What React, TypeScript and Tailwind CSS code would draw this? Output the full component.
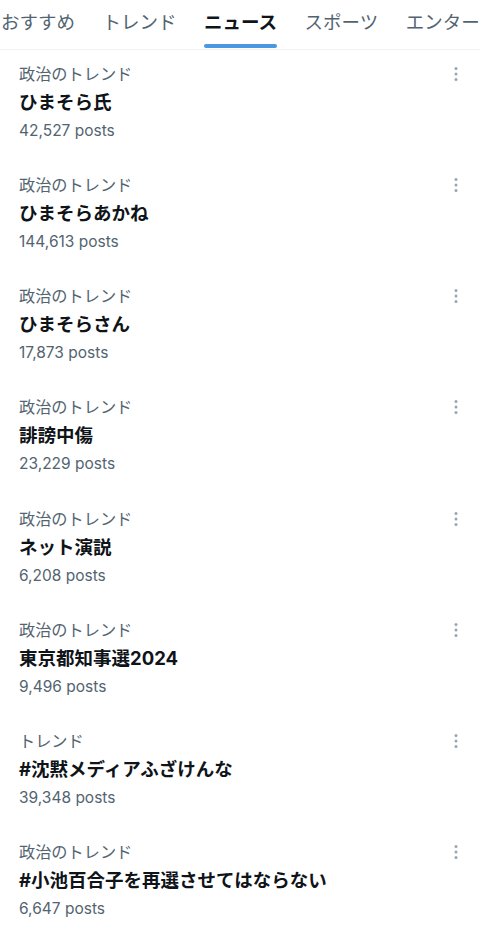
import * as React from 'react';

const tabs = ['おすすめ', 'トレンド', 'ニュース', 'スポーツ', 'エンター'];

const trends = [
  { cat: '政治のトレンド', title: 'ひまそら氏', posts: '42,527 posts' },
  { cat: '政治のトレンド', title: 'ひまそらあかね', posts: '144,613 posts' },
  { cat: '政治のトレンド', title: 'ひまそらさん', posts: '17,873 posts' },
  { cat: '政治のトレンド', title: '誹謗中傷', posts: '23,229 posts' },
  { cat: '政治のトレンド', title: 'ネット演説', posts: '6,208 posts' },
  { cat: '政治のトレンド', title: '東京都知事選2024', posts: '9,496 posts' },
  { cat: 'トレンド', title: '#沈黙メディアふざけんな', posts: '39,348 posts' },
  { cat: '政治のトレンド', title: '#小池百合子を再選させてはならない', posts: '6,647 posts' },
];

const MoreIcon = () => (
  <svg width="6" height="16" viewBox="0 0 6 16" className="text-[#9aa5b0]">
    <circle cx="3" cy="2.5" r="1.5" fill="currentColor" />
    <circle cx="3" cy="8" r="1.5" fill="currentColor" />
    <circle cx="3" cy="13.5" r="1.5" fill="currentColor" />
  </svg>
);

export default function App() {
  return (
    <div
      className="w-[480px] min-h-[931px] bg-white overflow-hidden"
      style={{ fontFamily: 'Inter, "Noto Sans CJK JP", sans-serif' }}
    >
      <div className="h-[50px] flex gap-[27.5px] pl-px border-b border-[#eff3f4] whitespace-nowrap overflow-hidden">
        {tabs.map((t, i) => (
          <div key={t} className="relative flex flex-col shrink-0">
            <span
              className={
                'text-[18.5px] leading-[44px] ' +
                (i === 2 ? 'font-bold text-[#0f1419]' : 'text-[#536471]')
              }
            >
              {t}
            </span>
            {i === 2 && <div className="h-[4px] rounded-full bg-[#4a97e3]" />}
          </div>
        ))}
      </div>
      <div>
        {trends.map((t, i) => (
          <div key={i} className="relative h-[111.15px] pl-[19px] pt-[10px]">
            <div className="text-[16.2px] leading-[28px] text-[#536471]">{t.cat}</div>
            <div className="text-[18.5px] leading-[29px] font-bold text-[#0f1419]">{t.title}</div>
            <div className="text-[15.5px] leading-[28px] text-[#536471]">{t.posts}</div>
            <div className="absolute right-[21px] top-[16px]">
              <MoreIcon />
            </div>
          </div>
        ))}
      </div>
    </div>
  );
}
